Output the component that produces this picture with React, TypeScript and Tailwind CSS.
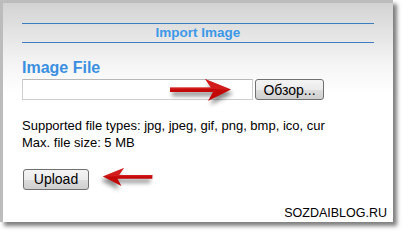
import React from 'react';

function Arrow({ dir, className }: { dir: 'left' | 'right'; className: string }) {
    // drawn pointing right; flipped for the left one
    return (
        <svg
            viewBox="0 0 64 24"
            className={`absolute drop-shadow-[2px_4px_2px_rgba(0,0,0,0.45)] ${dir === 'left' ? '-scale-x-100' : ''} ${className}`}
        >
            <path d="M2 9.5 L43 9.5 L37 1 L63 11.5 L40 23 L45 14 L2 14 Z" fill="#c40808" />
            <path d="M2 9.5 L43 9.5 L37 1 L63 11.5 L56 11.5 L44 11 L2 11.5 Z" fill="#e03030" opacity="0.5" />
        </svg>
    );
}

export default function App() {
    const btn =
        "h-[21px] border border-[#707070] rounded-[3px] bg-[linear-gradient(to_bottom,#f4f4f4_0%,#ebebeb_50%,#dddddd_51%,#cfcfcf_100%)] text-[14px] text-black leading-none";

    return (
        <div className="w-[410px] h-[240px] bg-white relative overflow-hidden font-['Liberation_Sans',Arial,sans-serif]">
            <div className="w-[393px] h-[222px] border-l-[3px] border-t-[3px] border-[#bcbcbc] bg-[linear-gradient(to_bottom,#d3d3d3_0px,#f4f4f4_60px,#ffffff_90px)] shadow-[4px_4px_4px_rgba(0,0,0,0.5)] flex flex-col px-[19px] pt-[20px]">
                <div className="border-t border-b border-[#3c7cc0] h-[21px] flex items-center justify-center">
                    <span className="text-[13.5px] font-bold text-[#3d98e8] leading-none">Import Image</span>
                </div>

                <div className="mt-[16px] text-[16px] font-bold text-[#3b8fe0] leading-[18px]">Image File</div>

                <div className="mt-[2px] flex gap-[2px]">
                    <div className="w-[231px] h-[21px] bg-white border border-[#cfcfcf] border-t-[#b8b8b8]" />
                    <button className={`${btn} w-[69px]`}>Обзор...</button>
                </div>

                <div className="mt-[17px] text-[13px] leading-[17px] text-black">
                    <div>Supported file types: jpg, jpeg, gif, png, bmp, ico, cur</div>
                    <div>Max. file size: 5 MB</div>
                </div>

                <div className="mt-[16px] pl-[1px]">
                    <button className={`${btn} w-[66px]`}>Upload</button>
                </div>

                <div className="mt-[14px] text-right text-[12.5px] leading-[17px] text-black -mr-[13px]">SOZDAIBLOG.RU</div>
            </div>

            <Arrow dir="right" className="left-[168px] top-[78px] w-[64px] h-[24px]" />
            <Arrow dir="left" className="left-[102px] top-[166px] w-[52px] h-[22px]" />
        </div>
    );
}
